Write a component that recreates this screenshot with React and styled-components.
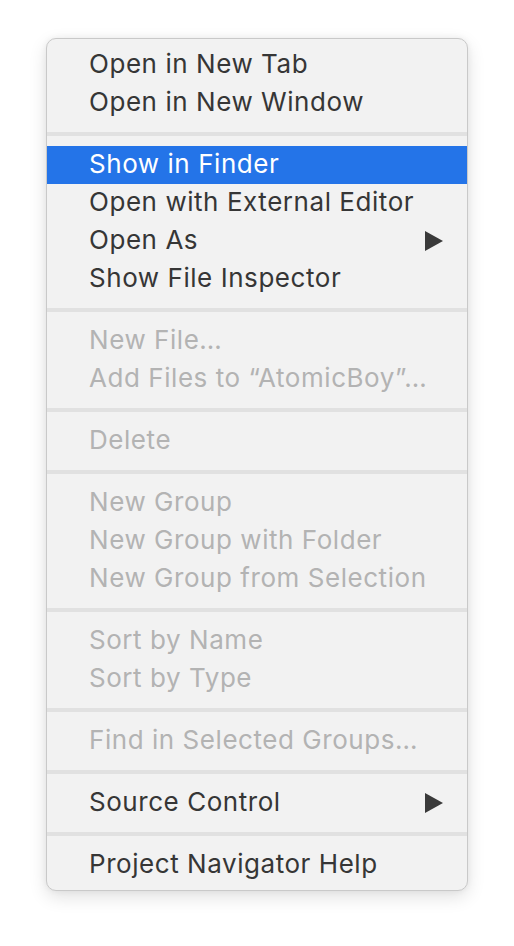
import styled, { createGlobalStyle } from "styled-components";

const GlobalStyle = createGlobalStyle`
  html, body {
    margin: 0;
    padding: 0;
    background: #ffffff;
  }
  body {
    font-family: "Inter", "Liberation Sans", sans-serif;
  }
`;

const Page = styled.div`
  width: 514px;
  height: 946px;
  padding: 38px 0 0 46px;
  box-sizing: border-box;
`;

const Menu = styled.div`
  width: 422px;
  box-sizing: border-box;
  padding: 7px 0 6px;
  background: #f2f2f2;
  border: 1px solid #c9c9c9;
  border-radius: 10px;
  box-shadow: 0 6px 18px rgba(0, 0, 0, 0.12), 0 0 6px rgba(0, 0, 0, 0.06);
  display: flex;
  flex-direction: column;
`;

const Item = styled.div`
  height: 38px;
  box-sizing: border-box;
  display: flex;
  align-items: center;
  justify-content: space-between;
  padding: 0 24px 4px 42px;
  font-size: 26px;
  letter-spacing: 0.55px;
  color: ${(p) => (p.$active ? "#ffffff" : p.$disabled ? "#b3b3b3" : "#363636")};
  background: ${(p) => (p.$active ? "#2474e8" : "transparent")};
  white-space: nowrap;
`;

const Separator = styled.div`
  height: 24px;
  display: flex;
  align-items: center;

  &::after {
    content: "";
    display: block;
    width: 100%;
    height: 4px;
    background: #e1e1e1;
  }
`;

const Arrow = styled.svg`
  width: 18px;
  height: 20px;
  flex: none;
  margin-top: 4px;
`;

const SubArrow = () => (
  <Arrow viewBox="0 0 18 20">
    <path d="M0 0 L18 10 L0 20 Z" fill="#3a3a3a" />
  </Arrow>
);

const groups = [
  [{ label: "Open in New Tab" }, { label: "Open in New Window" }],
  [
    { label: "Show in Finder", active: true },
    { label: "Open with External Editor" },
    { label: "Open As", sub: true },
    { label: "Show File Inspector" },
  ],
  [
    { label: "New File…", disabled: true },
    { label: "Add Files to “AtomicBoy”…", disabled: true },
  ],
  [{ label: "Delete", disabled: true }],
  [
    { label: "New Group", disabled: true },
    { label: "New Group with Folder", disabled: true },
    { label: "New Group from Selection", disabled: true },
  ],
  [
    { label: "Sort by Name", disabled: true },
    { label: "Sort by Type", disabled: true },
  ],
  [{ label: "Find in Selected Groups…", disabled: true }],
  [{ label: "Source Control", sub: true }],
  [{ label: "Project Navigator Help" }],
];

export default function App() {
  return (
    <>
      <GlobalStyle />
      <Page>
        <Menu>
          {groups.map((group, gi) => (
            <div key={gi}>
              {gi > 0 && <Separator />}
              {group.map((it) => (
                <Item key={it.label} $active={it.active} $disabled={it.disabled}>
                  <span>{it.label}</span>
                  {it.sub && <SubArrow />}
                </Item>
              ))}
            </div>
          ))}
        </Menu>
      </Page>
    </>
  );
}
